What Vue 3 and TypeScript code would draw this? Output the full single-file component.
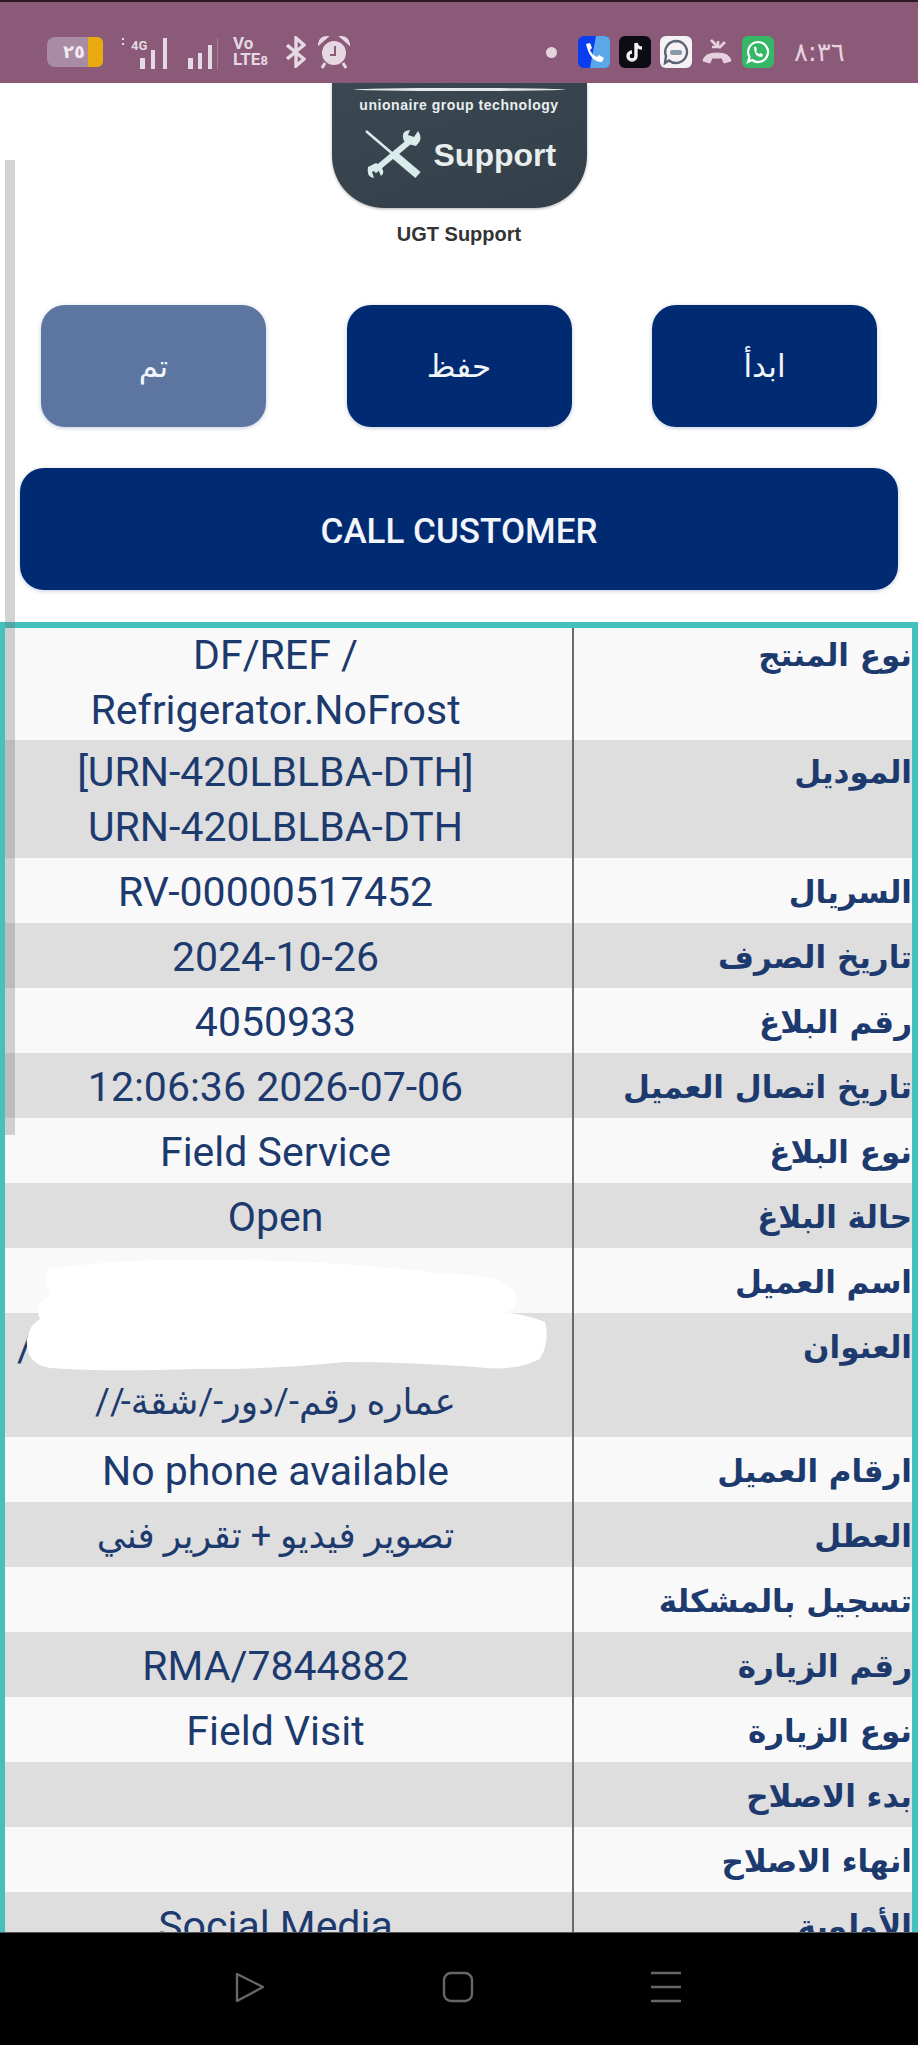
<script setup lang="ts">
interface Row {
  label: string;
  lines: string[];
  kind?: string;
}

const rows: Row[] = [
  { label: "نوع المنتج", lines: ["DF/REF /", "Refrigerator.NoFrost"], kind: "first" },
  { label: "الموديل", lines: ["[URN-420LBLBA-DTH]", "URN-420LBLBA-DTH"], kind: "two" },
  { label: "السريال", lines: ["RV-00000517452"] },
  { label: "تاريخ الصرف", lines: ["2024-10-26"] },
  { label: "رقم البلاغ", lines: ["4050933"] },
  { label: "تاريخ اتصال العميل", lines: ["12:06:36 2026-07-06"] },
  { label: "نوع البلاغ", lines: ["Field Service"] },
  { label: "حالة البلاغ", lines: ["Open"] },
  { label: "اسم العميل", lines: [""] },
  { label: "العنوان", lines: ["/", "عماره رقم-/دور-/شقة-//"], kind: "address" },
  { label: "ارقام العميل", lines: ["No phone available"] },
  { label: "العطل", lines: ["تصوير فيديو + تقرير فني"] },
  { label: "تسجيل بالمشكلة", lines: [""] },
  { label: "رقم الزيارة", lines: ["RMA/7844882"] },
  { label: "نوع الزيارة", lines: ["Field Visit"] },
  { label: "بدء الاصلاح", lines: [""] },
  { label: "انهاء الاصلاح", lines: [""] },
  { label: "الأولوية", lines: ["Social Media"] },
];

const actions = [
  { text: "ابدأ", done: false },
  { text: "حفظ", done: false },
  { text: "تم", done: true },
];

function isArabic(line: string) {
  return /[\u0600-\u06ff]/.test(line);
}
</script>

<template>
  <div class="phone">
    <header class="status">
      <div class="status-left">
        <div class="battery"><span class="battery-level">٢٥</span><span class="battery-tip"></span></div>
        <svg class="sig" width="50" height="34" viewBox="0 0 50 34" fill="#e6d8e2">
          <text x="9" y="15" font-size="13" font-weight="700" font-family="Roboto, sans-serif">4G</text>
          <rect x="0" y="3" width="2" height="2" /><rect x="0" y="8" width="2" height="2" />
          <rect x="18" y="23" width="5" height="11" /><rect x="29" y="15" width="4" height="19" /><rect x="41" y="3" width="4" height="31" />
        </svg>
        <svg class="sig2" width="30" height="34" viewBox="0 0 30 34" fill="#e6d8e2">
          <rect x="0" y="23" width="5" height="11" /><rect x="10" y="18" width="4" height="16" /><rect x="20" y="10" width="4" height="24" />
          <rect x="29" y="3" width="1" height="31" opacity=".3" />
        </svg>
        <div class="volte"><span>Vo</span><span>LTE<i>8</i></span></div>
        <svg width="20" height="32" viewBox="0 0 20 32" fill="none" stroke="#e6d8e2" stroke-width="3.4">
          <path d="M1 9 L18 23 L10 30 V2 L18 9 L1 23" />
        </svg>
        <svg width="32" height="34" viewBox="0 0 32 34">
          <path d="M1 9 Q2 2 9 2 Z M31 9 Q30 2 23 2 Z" fill="#e6d8e2" stroke="#e6d8e2" stroke-width="2" />
          <circle cx="16" cy="18" r="12" fill="#e6d8e2" />
          <path d="M17 11 V20 H12" fill="none" stroke="#8a5a78" stroke-width="2" />
          <path d="M7 28 L4 33 M25 28 L28 33" stroke="#e6d8e2" stroke-width="3" />
        </svg>
      </div>
      <div class="status-right">
        <span class="dot"></span>
        <svg class="app" viewBox="0 0 32 32">
          <rect width="32" height="32" rx="6" fill="#0a3df0" />
          <path d="M18 0 H26 Q32 0 32 6 V26 Q32 32 26 32 H12 Z" fill="#5aa7ea" />
          <path d="M8 8 L12 7 L14 12 L12 14 Q14 19 19 21 L21 19 L26 22 L24 26 Q12 26 8 8 Z" fill="#fff" />
        </svg>
        <svg class="app" viewBox="0 0 32 32">
          <rect width="32" height="32" rx="6" fill="#0c0c14" />
          <path d="M17 7 V20 A4 4 0 1 1 13 16 M17 7 Q18 12 23 12" fill="none" stroke="#f2f2f2" stroke-width="3.4" />
        </svg>
        <svg class="app" viewBox="0 0 32 32">
          <rect width="32" height="32" rx="6" fill="#f6f1f5" />
          <path d="M16 5 A11 11 0 1 1 9 24.5 L5 27 L6 20 A11 11 0 0 1 16 5 Z" fill="none" stroke="#5a6472" stroke-width="2.4" />
          <rect x="10" y="14" width="12" height="5" rx="2" fill="#8b98a8" />
        </svg>
        <svg class="app" viewBox="0 0 32 32" fill="none" stroke="#e6d2de">
          <path d="M2 25 Q3 17 16 17 Q29 17 30 25 L23 27 L21 22 H11 L9 27 Z" fill="#e6d2de" />
          <path d="M10 4 L17 11 M17 5 V11 H11 M18 12 L24 6" stroke-width="2.6" />
        </svg>
        <svg class="app" viewBox="0 0 32 32">
          <rect width="32" height="32" rx="6" fill="#35b767" />
          <path d="M16 6 A10 10 0 1 1 10 24 L6 26 L7.5 21 A10 10 0 0 1 16 6 Z" fill="none" stroke="#fff" stroke-width="2.2" />
          <path d="M12 11 L14 10.500 L15 14 L14 15 Q15 17 17 18 L18.500 17 L21 18.500 L20 21 Q12 21 12 11 Z" fill="#fff" />
        </svg>
        <span class="time" dir="ltr">٨:٣٦</span>
      </div>
    </header>

    <main class="content">
      <div class="scroll-thumb"></div>

      <div class="logo">
        <div class="logo-shine"></div>
        <div class="logo-brand">unionaire group technology</div>
        <div class="logo-main">
          <svg width="60" height="52" viewBox="0 0 60 52" fill="none" stroke="#d9ecec">
            <path d="M2 2 L30 26" stroke-width="2.6" />
            <path d="M28 24 L54 46" stroke-width="8" />
            <path d="M10 42 L46 12" stroke-width="6" />
            <path d="M12 34 L4 38 Q2 48 10 49 L8 43 L14 40 L17 47 Q22 44 16 36 Z M44 15 L52 17 Q60 10 54 2 L50 8 L44 6 L46 1 Q36 2 40 12 Z" fill="#d9ecec" stroke="none" />
          </svg>
          <span>Support</span>
        </div>
      </div>
      <div class="logo-caption">UGT Support</div>

      <div class="actions" dir="rtl">
        <button v-for="a in actions" :key="a.text" class="btn" :class="{ done: a.done }">{{ a.text }}</button>
      </div>

      <button class="btn call">CALL CUSTOMER</button>

      <section class="table">
        <div v-for="row in rows" :key="row.label" class="row" :class="row.kind">
          <div class="val">
            <div
              v-for="(line, i) in row.lines"
              :key="i"
              class="line"
              :class="{ slash: line === '/', ar: isArabic(line) }"
              dir="auto"
            >{{ line }}</div>
          </div>
          <div class="label" dir="rtl">{{ row.label }}</div>
        </div>
        <!-- hand-painted redaction over name and address -->
        <svg class="redact" width="560" height="125" viewBox="0 0 560 125" fill="#fff">
          <path d="M45 15 Q110 4 230 6 Q350 8 440 20 Q510 20 512 45 Q510 60 495 58 Q520 60 540 68 Q545 88 535 105 Q510 118 470 113 Q400 108 340 108 Q260 116 190 115 Q100 118 45 114 Q20 110 22 85 Q25 70 35 65 Q28 50 45 42 Q38 20 45 15 Z" />
        </svg>
      </section>
    </main>

    <footer class="nav">
      <svg width="32" height="32" viewBox="0 0 32 32" fill="none" stroke="#666" stroke-width="2.4" stroke-linejoin="round">
        <path d="M3 3 L29 16 L3 30 Z" />
      </svg>
      <svg width="32" height="32" viewBox="0 0 32 32" fill="none" stroke="#666" stroke-width="2.4">
        <rect x="2" y="2" width="28" height="28" rx="7" />
      </svg>
      <svg width="32" height="32" viewBox="0 0 32 32" fill="none" stroke="#666" stroke-width="2.4">
        <path d="M1 2 H31 M1 16 H31 M1 30 H31" />
      </svg>
    </footer>
  </div>
</template>

<style>
html,
body {
  margin: 0;
  background: #fff;
}
</style>

<style scoped>
.phone {
  width: 918px;
  height: 2045px;
  display: flex;
  flex-direction: column;
  overflow: hidden;
  font-family: Roboto, "DejaVu Sans", sans-serif;
}

.status {
  height: 83px;
  box-sizing: border-box;
  flex: none;
  border-top: 2px solid #2a1a26;
  background: #8a5a78;
  display: flex;
  justify-content: space-between;
  align-items: center;
  padding: 19px 68px 0 47px;
}

.status-left,
.status-right {
  display: flex;
  align-items: center;
}

.status-left {
  gap: 12px;
}

.status-right {
  gap: 9px;
}

.battery {
  width: 56px;
  height: 30px;
  margin-right: 7px;
  border-radius: 8px 6px 6px 8px;
  background: #a98ca4;
  display: flex;
  justify-content: flex-end;
  overflow: hidden;
}

.battery-level {
  font: 700 18px/30px "DejaVu Sans", sans-serif;
  color: #f3eaf1;
  margin-right: 3px;
}

.battery-tip {
  width: 15px;
  background: #e9a90f;
}

.sig2 {
  margin-left: 4px;
}

.volte {
  display: flex;
  flex-direction: column;
  color: #e6d8e2;
  font: 700 17px/16px Roboto, sans-serif;
  margin-left: 3px;
  width: 41px;
}

.volte i {
  font-style: normal;
  font-size: 13px;
}

.dot {
  width: 11px;
  height: 11px;
  border-radius: 50%;
  background: #e6d2de;
  margin-right: 12px;
}

.app {
  width: 32px;
  height: 32px;
}

.time {
  color: #e6d2de;
  font: 400 26px/32px "DejaVu Sans", sans-serif;
  margin-left: 11px;
  width: 56px;
}

.content {
  position: relative;
  flex: 1;
  min-height: 0;
  overflow: hidden;
  display: flex;
  flex-direction: column;
  background: #fff;
}

.scroll-thumb {
  position: absolute;
  z-index: 2;
  left: 5px;
  top: 77px;
  width: 10px;
  height: 975px;
  background: rgba(110, 110, 110, 0.3);
}

.logo {
  position: relative;
  flex: none;
  align-self: center;
  width: 255px;
  height: 125px;
  box-sizing: border-box;
  background: linear-gradient(160deg, #3b4852, #333f49);
  border-radius: 0 0 52px 52px;
  color: #e8eeee;
  text-align: center;
  box-shadow: 0 1px 3px rgba(0, 0, 0, 0.3);
}

.logo-shine {
  position: absolute;
  left: 22px;
  right: 22px;
  top: 5px;
  height: 3px;
  border-radius: 50%;
  background: #e4e9ea;
}

.logo-brand {
  padding-top: 14px;
  font: 700 14px/16px "Liberation Sans", sans-serif;
  letter-spacing: 0.55px;
}

.logo-main {
  display: flex;
  align-items: center;
  gap: 10px;
  padding: 16px 0 0 32px;
}

.logo-main span {
  font: 700 32px/36px "Liberation Sans", sans-serif;
}

.logo-caption {
  flex: none;
  text-align: center;
  margin-top: 16px;
  font: 700 20px/20px "Liberation Sans", sans-serif;
  color: #333;
}

.actions {
  flex: none;
  display: flex;
  justify-content: space-between;
  margin-top: 61px;
  padding: 0 41px;
}

.btn {
  width: 225px;
  height: 122px;
  padding: 0;
  border: none;
  border-radius: 24px;
  background: #002b73;
  color: #f2f5fa;
  font: 400 31px/1 "DejaVu Sans", sans-serif;
  box-shadow: 0 1px 4px rgba(0, 40, 110, 0.25);
}

.btn.done {
  background: #5d75a1;
}

.call {
  flex: none;
  align-self: center;
  width: 878px;
  margin-top: 41px;
  padding-top: 4px;
  font: 500 35px/1 Roboto, sans-serif;
}

.table {
  position: relative;
  flex: none;
  margin-top: 32px;
  border: solid #45c1bd;
  border-width: 6px 6px 0 5px;
}

.row {
  display: grid;
  grid-template-columns: 569px 1fr;
  background: #f9f9f9;
  color: #1d3a6e;
}

.row:nth-child(even) {
  background: #dedede;
}

.val {
  padding: 7px 34px 3px 8px;
  border-right: 2px solid #6a6a6a;
  box-sizing: border-box;
  text-align: center;
  font-size: 41px;
  min-height: 65px;
}

.first .val {
  padding-top: 0;
  padding-bottom: 2px;
}

.two .val {
  padding-top: 5px;
}

.address .val {
  padding-bottom: 7px;
}

.line {
  line-height: 55px;
  min-height: 55px;
  white-space: nowrap;
}

.line.ar {
  font-size: 36px;
}

.slash {
  text-align: left;
  padding-left: 4px;
}

.label {
  padding-top: 7px;
  font: 700 31px/55px "DejaVu Sans", sans-serif;
  white-space: nowrap;
}

.first .label {
  padding-top: 0;
}

.two .label {
  padding-top: 5px;
}

.redact {
  position: absolute;
  left: 0;
  top: 626px;
}

.nav {
  height: 113px;
  flex: none;
  box-sizing: border-box;
  border-top: 1px solid #555;
  background: #000;
  display: flex;
  justify-content: center;
  align-items: center;
  gap: 176px;
  padding: 0 3px 4px 0;
}
</style>
